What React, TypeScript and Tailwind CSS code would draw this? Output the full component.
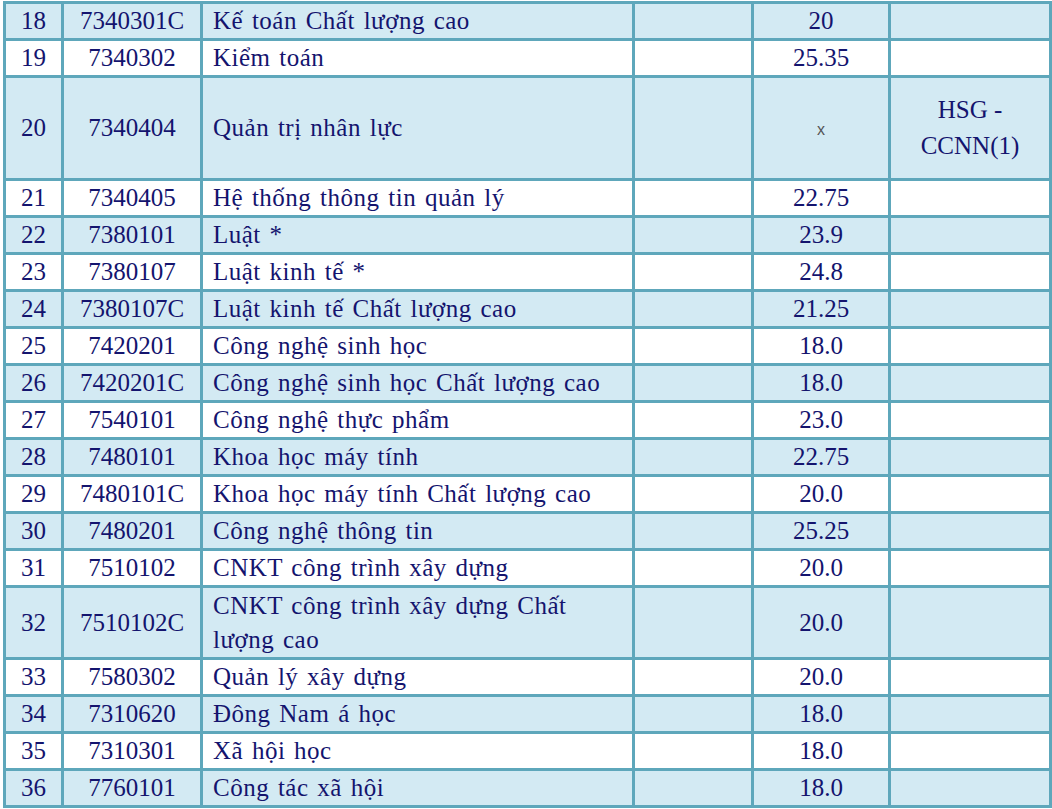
const rows: { no: number; code: string; name: string; score: string; note?: string; h: string }[] = [
  { no: 18, code: '7340301C', name: 'Kế toán Chất lượng cao', score: '20', h: 'h-[37px]' },
  { no: 19, code: '7340302', name: 'Kiểm toán', score: '25.35', h: 'h-[37px]' },
  { no: 20, code: '7340404', name: 'Quản trị nhân lực', score: 'x', note: 'HSG - CCNN(1)', h: 'h-[103px]' },
  { no: 21, code: '7340405', name: 'Hệ thống thông tin quản lý', score: '22.75', h: 'h-[37px]' },
  { no: 22, code: '7380101', name: 'Luật *', score: '23.9', h: 'h-[37px]' },
  { no: 23, code: '7380107', name: 'Luật kinh tế *', score: '24.8', h: 'h-[37px]' },
  { no: 24, code: '7380107C', name: 'Luật kinh tế Chất lượng cao', score: '21.25', h: 'h-[37px]' },
  { no: 25, code: '7420201', name: 'Công nghệ sinh học', score: '18.0', h: 'h-[37px]' },
  { no: 26, code: '7420201C', name: 'Công nghệ sinh học Chất lượng cao', score: '18.0', h: 'h-[37px]' },
  { no: 27, code: '7540101', name: 'Công nghệ thực phẩm', score: '23.0', h: 'h-[37px]' },
  { no: 28, code: '7480101', name: 'Khoa học máy tính', score: '22.75', h: 'h-[37px]' },
  { no: 29, code: '7480101C', name: 'Khoa học máy tính Chất lượng cao', score: '20.0', h: 'h-[37px]' },
  { no: 30, code: '7480201', name: 'Công nghệ thông tin', score: '25.25', h: 'h-[37px]' },
  { no: 31, code: '7510102', name: 'CNKT công trình xây dựng', score: '20.0', h: 'h-[37px]' },
  { no: 32, code: '7510102C', name: 'CNKT công trình xây dựng Chất lượng cao', score: '20.0', h: 'h-[72px]' },
  { no: 33, code: '7580302', name: 'Quản lý xây dựng', score: '20.0', h: 'h-[37px]' },
  { no: 34, code: '7310620', name: 'Đông Nam á học', score: '18.0', h: 'h-[37px]' },
  { no: 35, code: '7310301', name: 'Xã hội học', score: '18.0', h: 'h-[37px]' },
  { no: 36, code: '7760101', name: 'Công tác xã hội', score: '18.0', h: 'h-[37px]' },
];

const cell = 'border-[3px] border-[#5ea7bb] py-0 align-middle';

export default function App() {
  return (
    <div className="min-h-screen bg-white pt-[1px] pl-[3px]">
      <table className="border-collapse table-fixed w-[1046px] font-['Liberation_Serif'] text-[25px] leading-[34px] text-[#14146e]">
        <colgroup>
          <col className="w-[58px]" />
          <col className="w-[139px]" />
          <col className="w-[432px]" />
          <col className="w-[119px]" />
          <col className="w-[137px]" />
          <col className="w-[161px]" />
        </colgroup>
        <tbody>
          {rows.map((r, i) => (
            <tr key={r.no} className={i % 2 === 0 ? 'bg-[#d3eaf3]' : 'bg-white'}>
              <td className={`${r.h} ${cell} px-0 text-center`}>{r.no}</td>
              <td className={`${cell} px-0 text-center`}>{r.code}</td>
              <td className={`${cell} pl-[10px] pr-2 text-left tracking-[0.5px] [word-spacing:2px]`}>{r.name}</td>
              <td className={`${cell} px-0`}></td>
              <td className={`${cell} px-0 text-center`}>
                {r.score === 'x' ? (
                  <span className="font-['Liberation_Sans'] text-[16px] text-[#555]">x</span>
                ) : (
                  r.score
                )}
              </td>
              <td className={`${cell} px-5 text-center leading-[36px]`}>{r.note}</td>
            </tr>
          ))}
        </tbody>
      </table>
    </div>
  );
}
